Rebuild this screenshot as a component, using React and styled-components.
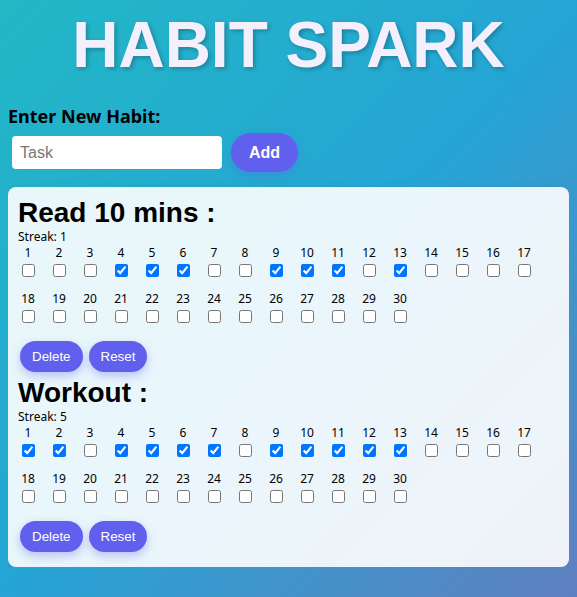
import React, { useState } from "react";
import styled, { createGlobalStyle } from "styled-components";

const GlobalStyle = createGlobalStyle`
  html {
    min-height: 100%;
    background: linear-gradient(135deg, #22b8c5 0%, #25a5d5 50%, #6080c0 100%);
  }
  body {
    margin: 8px;
    font-family: "Noto Sans", "Open Sans", sans-serif;
    color: #000;
  }
`;

const Title = styled.h1`
  margin: 0 0 22px;
  font-family: "Liberation Sans", Arial, sans-serif;
  font-size: 64px;
  font-weight: 700;
  line-height: normal;
  text-align: center;
  color: #f4effd;
  text-shadow: 2px 2px 4px rgba(0, 0, 0, 0.25);
`;

const FormLabel = styled.h3`
  margin: 0;
  font-size: 18px;
  font-weight: 700;
  line-height: 24px;
`;

const FormRow = styled.div`
  display: flex;
  align-items: center;
  gap: 9px;
  margin-top: 5px;
  padding-left: 4px;
`;

const TaskInput = styled.input`
  box-sizing: border-box;
  width: 210px;
  height: 33px;
  padding: 8px;
  border: none;
  border-radius: 4px;
  font-family: "Liberation Sans", Arial, sans-serif;
  font-size: 16px;
  outline: none;

  &::placeholder {
    color: #767676;
  }
`;

const PillButton = styled.button`
  border: none;
  color: #fff;
  background: #6160ee;
  font-family: "Liberation Sans", Arial, sans-serif;
  font-size: ${(p) => (p.$big ? "16px" : "13.33px")};
  font-weight: ${(p) => (p.$big ? 700 : 400)};
  line-height: ${(p) => (p.$big ? "19px" : "normal")};
  padding: ${(p) => (p.$big ? "10px 18px" : "8px 12px")};
  border-radius: 20px;
  box-shadow: 0 4px 10px rgba(97, 96, 238, 0.35);
  cursor: pointer;
`;

const Card = styled.div`
  margin-top: 15px;
  padding: 10px;
  border-radius: 8px;
  background: rgba(255, 255, 255, 0.9);
  box-shadow: 0 4px 12px rgba(0, 0, 0, 0.1);
`;

const HabitName = styled.h2`
  margin: 0;
  font-family: "Liberation Sans", Arial, sans-serif;
  font-size: 28px;
  font-weight: 700;
  line-height: normal;
`;

const Streak = styled.div`
  font-size: 12px;
  line-height: 16px;
`;

const DayGrid = styled.div`
  display: flex;
  flex-wrap: wrap;
  column-gap: 11px;
  row-gap: 11px;
`;

const Day = styled.label`
  display: flex;
  flex-direction: column;
  align-items: center;
  width: 20px;
  font-size: 12px;
  line-height: 16px;
`;

const DayBox = styled.input`
  width: 13px;
  height: 13px;
  margin: 3px 3px 3px 4px;
`;

const ButtonRow = styled.div`
  display: flex;
  gap: 6px;
  margin: 15px 0 5px;
  padding-left: 2px;
`;

const initialHabits = [
  { name: "Read 10 mins", streak: 1, done: [4, 5, 6, 9, 10, 11, 13] },
  { name: "Workout", streak: 5, done: [1, 2, 4, 5, 6, 7, 9, 10, 11, 12, 13] },
];

const days = Array.from({ length: 30 }, (_, i) => i + 1);

const Habit = ({ habit, onToggle }) => (
  <div>
    <HabitName>{habit.name} :</HabitName>
    <Streak>Streak: {habit.streak}</Streak>
    <DayGrid>
      {days.map((d) => (
        <Day key={d}>
          {d}
          <DayBox
            type="checkbox"
            checked={habit.done.includes(d)}
            onChange={() => onToggle(d)}
          />
        </Day>
      ))}
    </DayGrid>
    <ButtonRow>
      <PillButton>Delete</PillButton>
      <PillButton>Reset</PillButton>
    </ButtonRow>
  </div>
);

const App = () => {
  const [habits, setHabits] = useState(initialHabits);

  const toggle = (idx, day) => {
    setHabits((list) =>
      list.map((h, i) =>
        i !== idx
          ? h
          : {
              ...h,
              done: h.done.includes(day)
                ? h.done.filter((x) => x !== day)
                : [...h.done, day],
            }
      )
    );
  };

  return (
    <>
      <GlobalStyle />
      <Title>HABIT SPARK</Title>
      <FormLabel>Enter New Habit:</FormLabel>
      <FormRow>
        <TaskInput placeholder="Task" />
        <PillButton $big>Add</PillButton>
      </FormRow>
      <Card>
        {habits.map((h, i) => (
          <Habit key={h.name} habit={h} onToggle={(d) => toggle(i, d)} />
        ))}
      </Card>
    </>
  );
};

export default App;
